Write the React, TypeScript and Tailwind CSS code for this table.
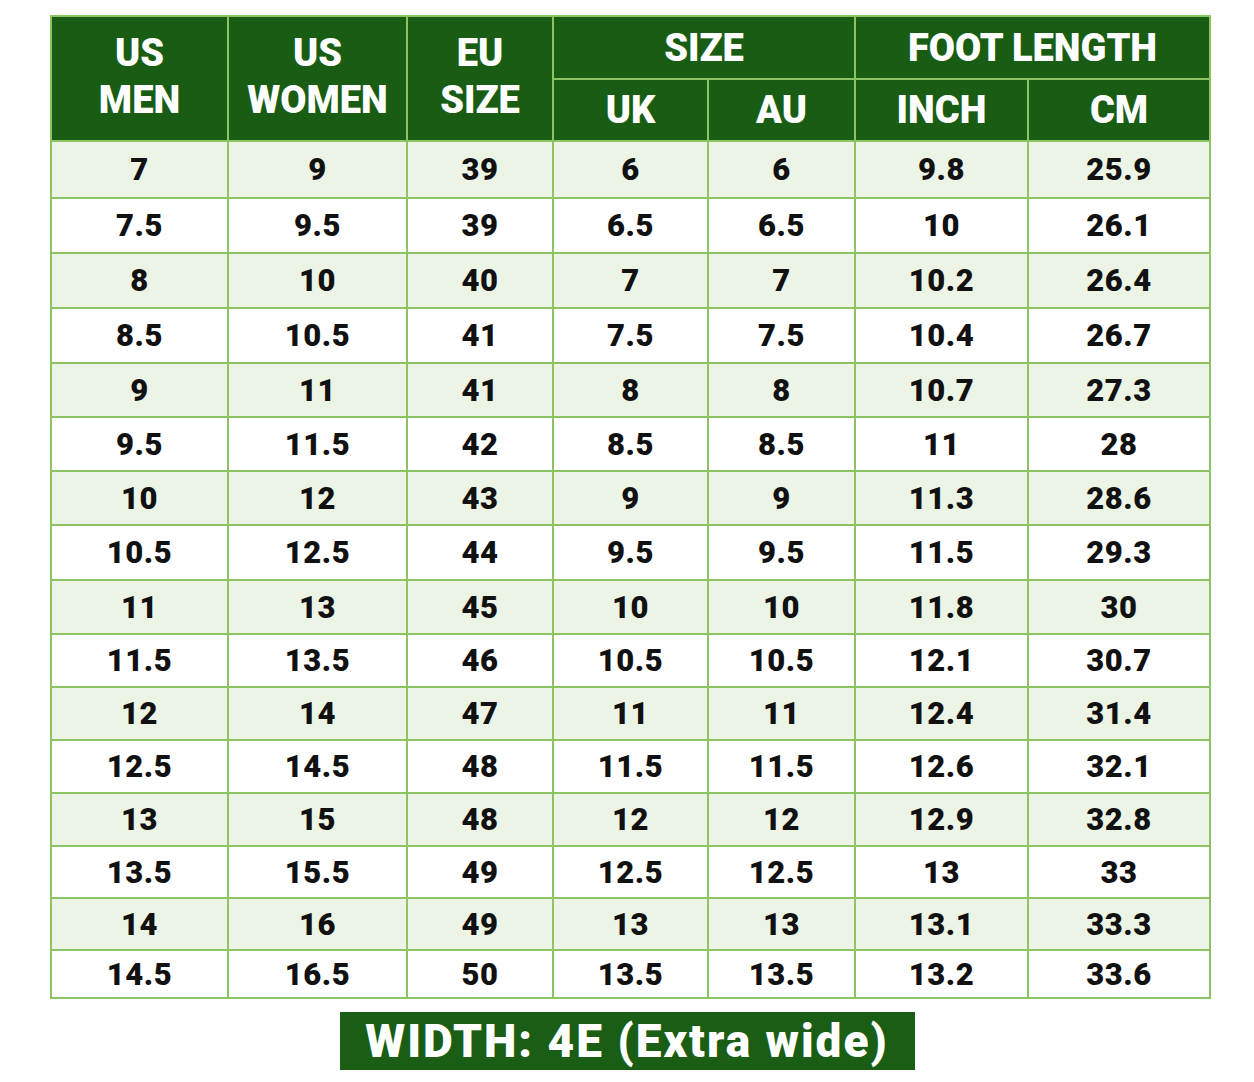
import React from 'react';

type Row = { cells: string[]; h: string };

const rows: Row[] = [
  { cells: ['7', '9', '39', '6', '6', '9.8', '25.9'], h: 'h-[57px]' },
  { cells: ['7.5', '9.5', '39', '6.5', '6.5', '10', '26.1'], h: 'h-[55px]' },
  { cells: ['8', '10', '40', '7', '7', '10.2', '26.4'], h: 'h-[55px]' },
  { cells: ['8.5', '10.5', '41', '7.5', '7.5', '10.4', '26.7'], h: 'h-[55px]' },
  { cells: ['9', '11', '41', '8', '8', '10.7', '27.3'], h: 'h-[54px]' },
  { cells: ['9.5', '11.5', '42', '8.5', '8.5', '11', '28'], h: 'h-[54px]' },
  { cells: ['10', '12', '43', '9', '9', '11.3', '28.6'], h: 'h-[54px]' },
  { cells: ['10.5', '12.5', '44', '9.5', '9.5', '11.5', '29.3'], h: 'h-[55px]' },
  { cells: ['11', '13', '45', '10', '10', '11.8', '30'], h: 'h-[54px]' },
  { cells: ['11.5', '13.5', '46', '10.5', '10.5', '12.1', '30.7'], h: 'h-[53px]' },
  { cells: ['12', '14', '47', '11', '11', '12.4', '31.4'], h: 'h-[53px]' },
  { cells: ['12.5', '14.5', '48', '11.5', '11.5', '12.6', '32.1'], h: 'h-[53px]' },
  { cells: ['13', '15', '48', '12', '12', '12.9', '32.8'], h: 'h-[53px]' },
  { cells: ['13.5', '15.5', '49', '12.5', '12.5', '13', '33'], h: 'h-[52px]' },
  { cells: ['14', '16', '49', '13', '13', '13.1', '33.3'], h: 'h-[52px]' },
  { cells: ['14.5', '16.5', '50', '13.5', '13.5', '13.2', '33.6'], h: 'h-[48px]' },
];

const colWidths = ['w-[177px]', 'w-[179px]', 'w-[146px]', 'w-[155px]', 'w-[147px]', 'w-[173px]', 'w-[182px]'];

// header cells: dark green, white heavy caps
const th = 'border-2 border-[#8cc463] bg-[#195d15] text-white font-black text-center align-middle text-[38px]';
const td = 'border-2 border-[#8cc463] text-center align-middle text-[#111] font-black text-[31px] tracking-[0.5px] leading-none';

export default function App() {
  return (
    <div className="min-h-[1082px] w-[1254px] bg-white font-['Roboto','Liberation_Sans',sans-serif] pt-[15px]">
      <table className="ml-[50px] border-collapse table-fixed w-[1159px]">
        <colgroup>
          {colWidths.map((w, i) => (
            <col key={i} className={w} />
          ))}
        </colgroup>
        <thead>
          <tr className="h-[63px]">
            <th rowSpan={2} className={`${th} leading-[47px] pb-1`}>US<br />MEN</th>
            <th rowSpan={2} className={`${th} leading-[47px] pb-1`}>US<br />WOMEN</th>
            <th rowSpan={2} className={`${th} leading-[47px] pb-1`}>EU<br />SIZE</th>
            <th colSpan={2} className={`${th} leading-none`}>SIZE</th>
            <th colSpan={2} className={`${th} leading-none`}>FOOT LENGTH</th>
          </tr>
          <tr className="h-[62px]">
            <th className={`${th} leading-none`}>UK</th>
            <th className={`${th} leading-none`}>AU</th>
            <th className={`${th} leading-none`}>INCH</th>
            <th className={`${th} leading-none`}>CM</th>
          </tr>
        </thead>
        <tbody>
          {rows.map((r, i) => (
            <tr key={i} className={`${r.h} ${i % 2 === 0 ? 'bg-[#ebf4e5]' : 'bg-white'}`}>
              {r.cells.map((c, j) => (
                <td key={j} className={td}>{c}</td>
              ))}
            </tr>
          ))}
        </tbody>
      </table>
      <div className="flex justify-center mt-[13px]">
        <div className="w-[575px] h-[58px] bg-[#1a5d14] flex items-center justify-center text-white font-black text-[46px] tracking-[2px] leading-none">
          WIDTH: 4E (Extra wide)
        </div>
      </div>
    </div>
  );
}
